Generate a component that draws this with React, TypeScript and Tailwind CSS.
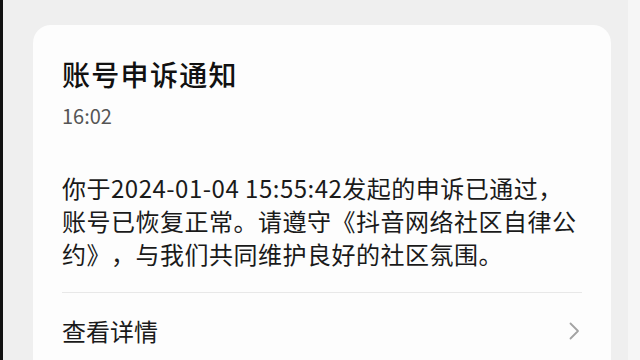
import React from 'react';

const font = { fontFamily: '"Noto Sans CJK SC", "Noto Sans", sans-serif' };

const ChevronRight: React.FC = () => (
    <svg width="13" height="18" viewBox="0 0 13 18" fill="none">
        <path d="M2.5 1.5 L10 9 L2.5 16.5" stroke="#a3a3a3" strokeWidth="1.8" strokeLinecap="round" strokeLinejoin="round" />
    </svg>
);

const App: React.FC = () => {
    const lines = [
        '你于2024-01-04 15:55:42发起的申诉已通过，',
        '账号已恢复正常。请遵守《抖音网络社区自律公',
        '约》，与我们共同维护良好的社区氛围。',
    ];

    return (
        <div className="flex w-[640px] h-[360px] overflow-hidden bg-[#efefef]" style={font}>
            {/* left black edge */}
            <div className="w-[3px] h-full bg-[#111]" />

            <div className="flex-1 pl-[30px] pr-[17px] pt-[25px]">
                <div className="flex flex-col h-[400px] rounded-t-[18px] bg-[#fdfdfd] pl-[29px] pr-[29px] pt-[31px]">
                    <h1 className="text-[28px] leading-[36px] font-medium text-[#111] tracking-[1.3px]">
                        账号申诉通知
                    </h1>
                    <p className="mt-[11px] text-[20px] leading-[26px] text-[#555]">16:02</p>

                    <div className="mt-[42px] text-[24px] leading-[33px] text-[#1a1a1a] tracking-[0.5px] [text-spacing-trim:space-all]">
                        {lines.map((l) => (
                            <div key={l} className="whitespace-nowrap">
                                {l}
                            </div>
                        ))}
                    </div>

                    <div className="mt-[22px] h-px bg-[#e8e8e8]" />

                    <div className="flex items-center justify-between h-[76px] pr-[1px]">
                        <span className="text-[24px] text-[#1a1a1a]">查看详情</span>
                        <ChevronRight />
                    </div>
                </div>
            </div>

            {/* lighter right edge */}
            <div className="w-[12px] h-full bg-[#f6f6f6]" />
        </div>
    );
};

export default App;
